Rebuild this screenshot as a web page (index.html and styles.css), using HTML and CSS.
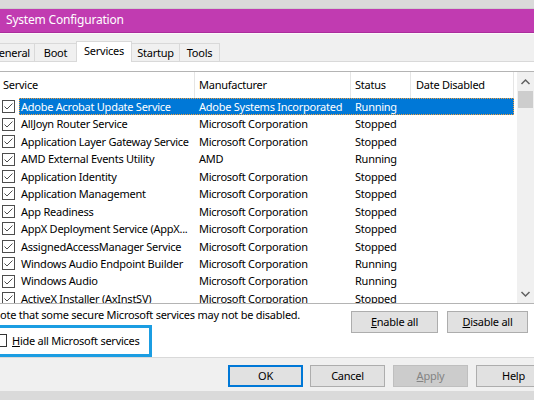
FILE: index.html
```html
<!DOCTYPE html>
<html>
<head>
<meta charset="utf-8">
<link rel="stylesheet" href="styles.css">
</head>
<body>
<div class="strip"></div>
<div class="titlebar">System Configuration</div>
<div class="dialog">
  <div class="tabs">
    <div class="tab t-general">General</div>
    <div class="tab t-boot">Boot</div>
    <div class="tab t-services active">Services</div>
    <div class="tab t-startup">Startup</div>
    <div class="tab t-tools">Tools</div>
  </div>
  <div class="panel">
    <div class="list">
      <div class="list-main">
        <div class="header">
          <div class="hc c1">Service</div>
          <div class="hc c2">Manufacturer</div>
          <div class="hc c3">Status</div>
          <div class="hc c4">Date Disabled</div>
          <div class="hc c5"></div>
        </div>
        <div class="rows">
          <div class="row selected"><div class="chk"><svg width="13" height="13" viewBox="0 0 13 13"><rect x="0.5" y="0.5" width="12" height="12" fill="#fff" stroke="#4d4d4d"/><path d="M2.5 6.5 L5 9 L10.5 3.5" fill="none" stroke="#4d4d4d"/></svg></div><div class="cells"><span class="n">Adobe Acrobat Update Service</span><span class="m">Adobe Systems Incorporated</span><span class="s">Running</span><span class="d"></span></div></div>
          <div class="row"><div class="chk"><svg width="13" height="13" viewBox="0 0 13 13"><rect x="0.5" y="0.5" width="12" height="12" fill="#fff" stroke="#4d4d4d"/><path d="M2.5 6.5 L5 9 L10.5 3.5" fill="none" stroke="#4d4d4d"/></svg></div><div class="cells"><span class="n">AllJoyn Router Service</span><span class="m">Microsoft Corporation</span><span class="s">Stopped</span><span class="d"></span></div></div>
          <div class="row"><div class="chk"><svg width="13" height="13" viewBox="0 0 13 13"><rect x="0.5" y="0.5" width="12" height="12" fill="#fff" stroke="#4d4d4d"/><path d="M2.5 6.5 L5 9 L10.5 3.5" fill="none" stroke="#4d4d4d"/></svg></div><div class="cells"><span class="n">Application Layer Gateway Service</span><span class="m">Microsoft Corporation</span><span class="s">Stopped</span><span class="d"></span></div></div>
          <div class="row"><div class="chk"><svg width="13" height="13" viewBox="0 0 13 13"><rect x="0.5" y="0.5" width="12" height="12" fill="#fff" stroke="#4d4d4d"/><path d="M2.5 6.5 L5 9 L10.5 3.5" fill="none" stroke="#4d4d4d"/></svg></div><div class="cells"><span class="n">AMD External Events Utility</span><span class="m">AMD</span><span class="s">Running</span><span class="d"></span></div></div>
          <div class="row"><div class="chk"><svg width="13" height="13" viewBox="0 0 13 13"><rect x="0.5" y="0.5" width="12" height="12" fill="#fff" stroke="#4d4d4d"/><path d="M2.5 6.5 L5 9 L10.5 3.5" fill="none" stroke="#4d4d4d"/></svg></div><div class="cells"><span class="n">Application Identity</span><span class="m">Microsoft Corporation</span><span class="s">Stopped</span><span class="d"></span></div></div>
          <div class="row"><div class="chk"><svg width="13" height="13" viewBox="0 0 13 13"><rect x="0.5" y="0.5" width="12" height="12" fill="#fff" stroke="#4d4d4d"/><path d="M2.5 6.5 L5 9 L10.5 3.5" fill="none" stroke="#4d4d4d"/></svg></div><div class="cells"><span class="n">Application Management</span><span class="m">Microsoft Corporation</span><span class="s">Stopped</span><span class="d"></span></div></div>
          <div class="row"><div class="chk"><svg width="13" height="13" viewBox="0 0 13 13"><rect x="0.5" y="0.5" width="12" height="12" fill="#fff" stroke="#4d4d4d"/><path d="M2.5 6.5 L5 9 L10.5 3.5" fill="none" stroke="#4d4d4d"/></svg></div><div class="cells"><span class="n">App Readiness</span><span class="m">Microsoft Corporation</span><span class="s">Stopped</span><span class="d"></span></div></div>
          <div class="row"><div class="chk"><svg width="13" height="13" viewBox="0 0 13 13"><rect x="0.5" y="0.5" width="12" height="12" fill="#fff" stroke="#4d4d4d"/><path d="M2.5 6.5 L5 9 L10.5 3.5" fill="none" stroke="#4d4d4d"/></svg></div><div class="cells"><span class="n">AppX Deployment Service (AppX...</span><span class="m">Microsoft Corporation</span><span class="s">Stopped</span><span class="d"></span></div></div>
          <div class="row"><div class="chk"><svg width="13" height="13" viewBox="0 0 13 13"><rect x="0.5" y="0.5" width="12" height="12" fill="#fff" stroke="#4d4d4d"/><path d="M2.5 6.5 L5 9 L10.5 3.5" fill="none" stroke="#4d4d4d"/></svg></div><div class="cells"><span class="n">AssignedAccessManager Service</span><span class="m">Microsoft Corporation</span><span class="s">Stopped</span><span class="d"></span></div></div>
          <div class="row"><div class="chk"><svg width="13" height="13" viewBox="0 0 13 13"><rect x="0.5" y="0.5" width="12" height="12" fill="#fff" stroke="#4d4d4d"/><path d="M2.5 6.5 L5 9 L10.5 3.5" fill="none" stroke="#4d4d4d"/></svg></div><div class="cells"><span class="n">Windows Audio Endpoint Builder</span><span class="m">Microsoft Corporation</span><span class="s">Running</span><span class="d"></span></div></div>
          <div class="row"><div class="chk"><svg width="13" height="13" viewBox="0 0 13 13"><rect x="0.5" y="0.5" width="12" height="12" fill="#fff" stroke="#4d4d4d"/><path d="M2.5 6.5 L5 9 L10.5 3.5" fill="none" stroke="#4d4d4d"/></svg></div><div class="cells"><span class="n">Windows Audio</span><span class="m">Microsoft Corporation</span><span class="s">Running</span><span class="d"></span></div></div>
          <div class="row"><div class="chk"><svg width="13" height="13" viewBox="0 0 13 13"><rect x="0.5" y="0.5" width="12" height="12" fill="#fff" stroke="#4d4d4d"/><path d="M2.5 6.5 L5 9 L10.5 3.5" fill="none" stroke="#4d4d4d"/></svg></div><div class="cells"><span class="n">ActiveX Installer (AxInstSV)</span><span class="m">Microsoft Corporation</span><span class="s">Stopped</span><span class="d"></span></div></div>
        </div>
      </div>
      <div class="scrollbar">
        <div class="sb-btn"><svg width="17" height="17" viewBox="0 0 17 17"><polyline points="4.5,12 8.5,8 12.5,12" fill="none" stroke="#606060" stroke-width="1.5"/></svg></div>
        <div class="sb-thumb"></div>
        <div class="sb-track"></div>
        <div class="sb-btn"><svg width="17" height="17" viewBox="0 0 17 17"><polyline points="4.5,6 8.5,10 12.5,6" fill="none" stroke="#606060" stroke-width="1.5"/></svg></div>
      </div>
    </div>
    <div class="below">
      <div class="note">Note that some secure Microsoft services may not be disabled.</div>
      <button class="btn btn-enable"><u>E</u>nable all</button>
      <button class="btn btn-disable"><u>D</u>isable all</button>
    </div>
    <div class="hide">
      <span class="box"></span>
      <span class="hide-label"><u>H</u>ide all Microsoft services</span>
    </div>
    <div class="annot"></div>
  </div>
  <div class="footer">
    <button class="btn fbtn ok">OK</button>
    <button class="btn fbtn cancel">Cancel</button>
    <button class="btn fbtn apply" disabled><u>A</u>pply</button>
    <button class="btn fbtn help">Help</button>
  </div>
</div>
<div class="bottomstrip"></div>
</body>
</html>
```

FILE: styles.css
```css
* { box-sizing: border-box; }
html, body { margin: 0; padding: 0; }
body {
  width: 534px;
  height: 400px;
  overflow: hidden;
  background: #f0f0f0;
  font-family: "Noto Sans", "Segoe UI", sans-serif;
  font-size: 11px;
  letter-spacing: -0.25px;
  color: #000;
}
.strip {
  height: 9px;
  background: #dadada;
  border-bottom: 1px solid #cdcdcd;
}
.titlebar {
  height: 24px;
  background: #c13bb1;
  border-bottom: 1px solid #ab2d9c;
  color: #fff;
  font-size: 12px;
  letter-spacing: -0.2px;
  line-height: 22px;
  padding-left: 6px;
}
.dialog {
  border-top: 1px solid #fafafa;
  background: #f0f0f0;
}
.tabs {
  height: 27px;
  display: flex;
  align-items: flex-end;
  margin-left: -14px;
  position: relative;
  z-index: 2;
}
.tab {
  height: 18px;
  line-height: 18px;
  text-align: center;
  background: #f0f0f0;
  border: 1px solid #d9d9d9;
  border-bottom: none;
  border-right: none;
}
.t-general { width: 48px; }
.t-boot { width: 42px; }
.t-services { width: 56px; }
.t-startup { width: 47px; }
.t-tools { width: 41px; border-right: 1px solid #d9d9d9; }
.tab.active {
  height: 21px;
  line-height: 18px;
  background: #fff;
  margin-bottom: -1px;
  border-right: 1px solid #d9d9d9;
}
.tab.active + .tab { border-left: none; }
.panel {
  position: relative;
  margin-left: -10px;
  width: 560px;
  height: 297px;
  background: #fff;
  border: 1px solid #d9d9d9;
}
.list {
  margin: 9px 0 0 6px;
  width: 538px;
  height: 233px;
  border: 1px solid #b4b4b4;
  display: flex;
  overflow: hidden;
}
.list-main {
  width: 519px;
  display: flex;
  flex-direction: column;
}
.header {
  display: flex;
  height: 26px;
  line-height: 26px;
  flex: none;
}
.hc { border-right: 1px solid #e5e5e5; white-space: nowrap; }
.c1 { width: 197px; padding-left: 5px; }
.c2 { width: 156px; padding-left: 4px; }
.c3 { width: 60px; padding-left: 4px; }
.c4 { width: 103px; padding-left: 5px; }
.c5 { width: 3px; border-right: none; }
.rows { flex: 1; overflow: hidden; }
.row {
  display: flex;
  height: 17.45px;
  line-height: 17.45px;
  white-space: nowrap;
}
.chk {
  width: 21px;
  padding-left: 4px;
  display: flex;
  align-items: center;
}
.chk svg { display: block; }
.cells {
  width: 495px;
  display: flex;
}
.cells span { display: block; overflow: hidden; }
.n { width: 176px; padding-left: 2px; }
.m { width: 156px; padding-left: 4px; }
.s { width: 60px; padding-left: 4px; }
.d { width: 103px; }
.row.selected .cells {
  background: #0078d7;
  color: #fff;
  outline: 1px dotted #f0a040;
  outline-offset: -1px;
}
.scrollbar {
  width: 17px;
  background: #f0f0f0;
  display: flex;
  flex-direction: column;
}
.sb-btn { height: 17px; flex: none; }
.sb-btn svg { display: block; }
.sb-thumb {
  height: 17px;
  margin: 2px 0 0 1px;
  width: 15px;
  background: #cdcdcd;
  flex: none;
}
.sb-track { flex: 1; }
.below {
  display: flex;
  margin-top: 7px;
  height: 22px;
}
.note {
  width: 360px;
  padding-left: 1px;
  line-height: 14px;
  margin-top: -3px;
  white-space: nowrap;
}
.btn {
  font-family: inherit;
  font-size: 11px;
  letter-spacing: -0.25px;
  color: #000;
  background: #e1e1e1;
  border: 1px solid #adadad;
  padding: 0;
  height: 22px;
  line-height: 18px;
}
.btn-enable { width: 87px; }
.btn-disable { width: 81px; margin-left: 9px; }
.hide {
  display: flex;
  align-items: center;
  margin: 1px 0 0 3px;
  height: 13px;
}
.box {
  width: 13px;
  height: 13px;
  border: 1px solid #333;
  background: #fff;
  flex: none;
}
.hide-label { margin-left: 5px; line-height: 13px; }
.annot {
  position: absolute;
  left: -3px;
  top: 263px;
  width: 164px;
  height: 32px;
  border: 3px solid #1b9de2;
}
.footer {
  display: flex;
  padding: 7px 0 4px 228px;
}
.fbtn { width: 75px; flex: none; }
.ok { border: 2px solid #0078d7; }
.cancel { margin-left: 7px; }
.apply {
  margin-left: 8px;
  background: #cccccc;
  border-color: #bfbfbf;
  color: #838383;
}
.help { margin-left: 8px; }
.bottomstrip {
  height: 20px;
  background: #dadada;
}
```
